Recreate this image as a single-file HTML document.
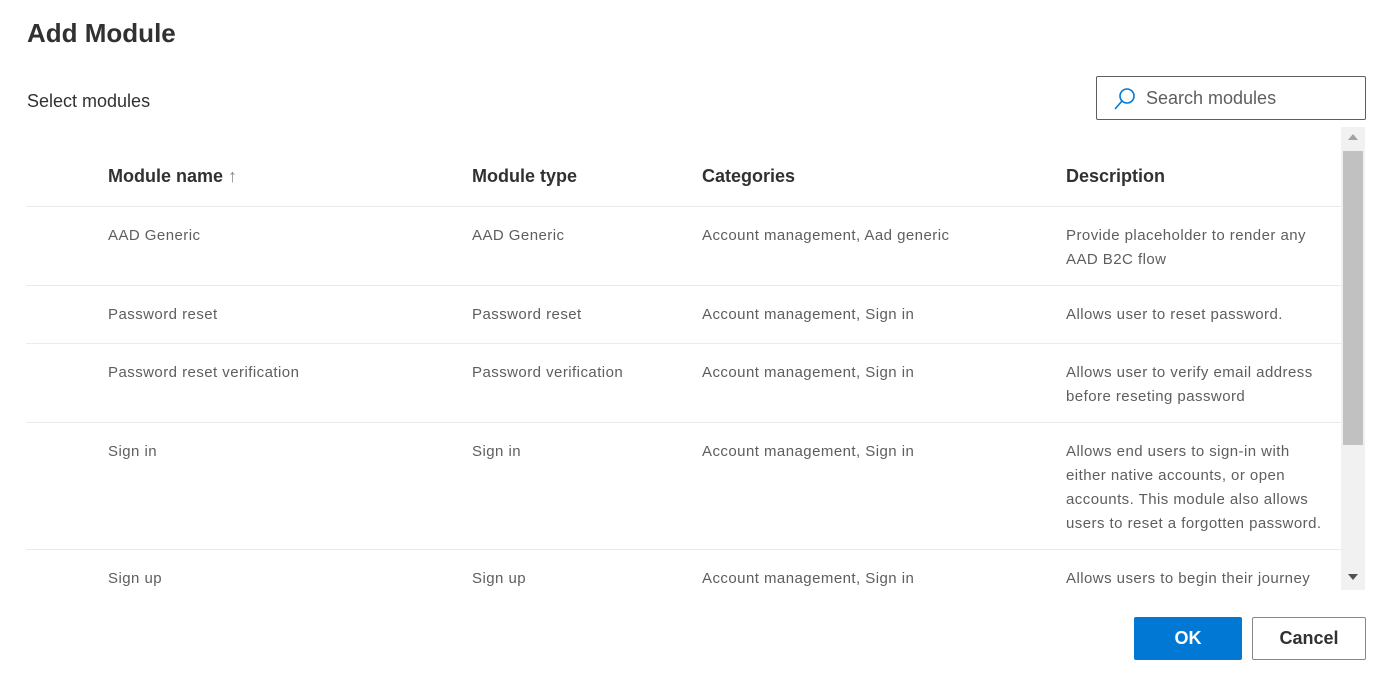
<!DOCTYPE html>
<html><head><style>
body{margin:0;width:1389px;height:678px;background:#fff;font-family:"Segoe UI","Liberation Sans",sans-serif;position:relative;overflow:hidden;color:#323130}
.a{position:absolute}
h1{position:absolute;left:27px;top:18px;margin:0;font-size:26px;font-weight:600;color:#323130}
.sel{left:27px;top:91px;font-size:18px}
.search{left:1096px;top:76px;width:270px;height:44px;border:1px solid #605e5c;border-radius:2px;box-sizing:border-box}
.search span{position:absolute;left:49px;top:11px;font-size:18px;color:#605e5c}
.hd{top:166px;font-size:18px;font-weight:600;color:#323130}
.line{left:26px;width:1315px;height:1px;background:#edebe9}
.c{font-size:15px;letter-spacing:0.45px;line-height:24px;color:#605e5c}
.sb{left:1341px;top:127px;width:24px;height:463px;background:#f1f1f1}
.th{left:1343px;top:151px;width:20px;height:294px;background:#c1c1c1}
.btn{top:617px;height:43px;box-sizing:border-box;border-radius:2px;font-size:18px;font-weight:600;text-align:center;line-height:43px}
</style></head><body>
<h1>Add Module</h1>
<div class="a sel">Select modules</div>
<div class="a search"><svg class="a" style="left:16px;top:10px" width="24" height="24" viewBox="0 0 24 24"><circle cx="14" cy="9" r="7" fill="none" stroke="#0078d4" stroke-width="1.6"/><line x1="9" y1="14" x2="2" y2="22" stroke="#0078d4" stroke-width="1.6"/></svg><span>Search modules</span></div>
<div class="a hd" style="left:108px">Module name <span style="font-weight:400;color:#8a8886">↑</span></div>
<div class="a hd" style="left:472px">Module type</div>
<div class="a hd" style="left:702px">Categories</div>
<div class="a hd" style="left:1066px">Description</div>
<div class="a line" style="top:206px"></div>
<div class="a line" style="top:285px"></div>
<div class="a line" style="top:343px"></div>
<div class="a line" style="top:422px"></div>
<div class="a line" style="top:549px"></div>

<div class="a c" style="left:108px;top:224px">AAD Generic</div>
<div class="a c" style="left:472px;top:224px">AAD Generic</div>
<div class="a c" style="left:702px;top:224px">Account management, Aad generic</div>
<div class="a c" style="left:1066px;top:224px;width:270px">Provide placeholder to render any<br>AAD B2C flow</div>

<div class="a c" style="left:108px;top:303px">Password reset</div>
<div class="a c" style="left:472px;top:303px">Password reset</div>
<div class="a c" style="left:702px;top:303px">Account management, Sign in</div>
<div class="a c" style="left:1066px;top:303px">Allows user to reset password.</div>

<div class="a c" style="left:108px;top:361px">Password reset verification</div>
<div class="a c" style="left:472px;top:361px">Password verification</div>
<div class="a c" style="left:702px;top:361px">Account management, Sign in</div>
<div class="a c" style="left:1066px;top:361px">Allows user to verify email address<br>before reseting password</div>

<div class="a c" style="left:108px;top:440px">Sign in</div>
<div class="a c" style="left:472px;top:440px">Sign in</div>
<div class="a c" style="left:702px;top:440px">Account management, Sign in</div>
<div class="a c" style="left:1066px;top:440px;white-space:nowrap">Allows end users to sign-in with<br>either native accounts, or open<br>accounts. This module also allows<br>users to reset a forgotten password.</div>

<div class="a c" style="left:108px;top:567px">Sign up</div>
<div class="a c" style="left:472px;top:567px">Sign up</div>
<div class="a c" style="left:702px;top:567px">Account management, Sign in</div>
<div class="a c" style="left:1066px;top:567px">Allows users to begin their journey</div>

<div class="a" style="left:0;top:590px;width:1389px;height:88px;background:#fff"></div>
<div class="a sb"></div><div class="a th"></div>
<div class="a" style="left:1348px;top:134px;width:0;height:0;border-left:5px solid transparent;border-right:5px solid transparent;border-bottom:6px solid #a3a3a3"></div>
<div class="a" style="left:1348px;top:574px;width:0;height:0;border-left:5px solid transparent;border-right:5px solid transparent;border-top:6px solid #505050"></div>

<div class="a btn" style="left:1134px;width:108px;background:#0078d4;color:#fff">OK</div>
<div class="a btn" style="left:1252px;width:114px;border:1px solid #8a8886;color:#323130;line-height:41px">Cancel</div>
</body></html>
